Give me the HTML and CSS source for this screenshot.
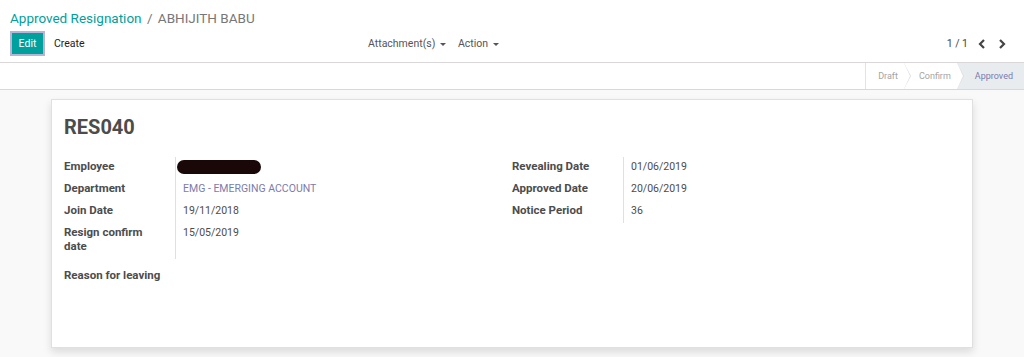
FILE: index.html
```html
<!DOCTYPE html>
<html lang="en">
<head>
    <meta charset="UTF-8">
    <title>Approved Resignation</title>
    <link rel="stylesheet" href="styles.css">
</head>
<body>
    <div class="control-panel">
        <div class="breadcrumb">
            <a href="#">Approved Resignation</a>
            <span class="sep">/</span>
            <span class="current">ABHIJITH BABU</span>
        </div>
        <div class="cp-row">
            <div class="cp-buttons">
                <button class="btn-edit">Edit</button>
                <button class="btn-link">Create</button>
            </div>
            <div class="cp-sidebar">
                <span class="dropdown">Attachment(s) <span class="caret"></span></span>
                <span class="dropdown">Action <span class="caret"></span></span>
            </div>
            <div class="pager">
                <span class="pager-value">1 / 1</span>
                <svg width="10" height="12" viewBox="0 0 10 12"><path d="M7 2 L3 6 L7 10" fill="none" stroke="#444" stroke-width="2.2"/></svg>
                <svg width="10" height="12" viewBox="0 0 10 12"><path d="M3 2 L7 6 L3 10" fill="none" stroke="#444" stroke-width="2.2"/></svg>
            </div>
        </div>
    </div>

    <div class="statusbar">
        <div class="status-steps">
            <span class="step">Draft</span>
            <span class="step">Confirm</span>
            <span class="step active">Approved</span>
        </div>
    </div>

    <div class="sheet-bg">
        <div class="sheet">
            <h1 class="title">RES040</h1>
            <div class="groups">
                <table class="group">
                    <tr><td class="label">Employee</td><td class="value"><span class="redact"></span></td></tr>
                    <tr><td class="label">Department</td><td class="value"><a href="#">EMG - EMERGING ACCOUNT</a></td></tr>
                    <tr><td class="label">Join Date</td><td class="value">19/11/2018</td></tr>
                    <tr><td class="label">Resign confirm<br>date</td><td class="value">15/05/2019</td></tr>
                </table>
                <table class="group">
                    <tr><td class="label">Revealing Date</td><td class="value">01/06/2019</td></tr>
                    <tr><td class="label">Approved Date</td><td class="value">20/06/2019</td></tr>
                    <tr><td class="label">Notice Period</td><td class="value">36</td></tr>
                </table>
            </div>
            <div class="reason">Reason for leaving</div>
        </div>
    </div>
</body>
</html>
```

FILE: styles.css
```css
body {
    margin: 0;
    font-family: Roboto, "Noto Sans", sans-serif;
    font-size: 10.5px;
    color: #4c4c4c;
    background-color: #f9f9f9;
    height: 357px;
    overflow: hidden;
}
.control-panel {
    background-color: #fff;
    padding: 8px 10px 0 10px;
    height: 54px;
    border-bottom: 1px solid #d9d7d7;
}
.breadcrumb {
    font-size: 13.5px;
    line-height: 20px;
    height: 21px;
}
.breadcrumb a {
    color: #00a09d;
    text-decoration: none;
}
.breadcrumb .sep {
    color: #777;
    margin: 0 2px;
}
.breadcrumb .current {
    color: #777;
}
.cp-row {
    display: flex;
    align-items: center;
    margin-top: 2px;
}
.cp-buttons {
    display: flex;
    align-items: center;
    width: 358px;
}
.btn-edit {
    background-color: #00a09d;
    color: #fff;
    border: 2px solid #b6b5d8;
    font-family: inherit;
    font-size: 10.5px;
    height: 25px;
    width: 35px;
    padding: 0;
}
.btn-link {
    background: none;
    border: none;
    font-family: inherit;
    font-size: 10.5px;
    color: #222;
    padding: 0 0 0 9px;
}
.cp-sidebar {
    display: flex;
    gap: 12px;
    flex: 1;
    color: #555;
}
.caret {
    display: inline-block;
    width: 0;
    height: 0;
    border-left: 3px solid transparent;
    border-right: 3px solid transparent;
    border-top: 3px solid #555;
    vertical-align: middle;
    margin-left: 2px;
}
.pager {
    display: flex;
    align-items: center;
    gap: 10px;
    padding-right: 7px;
}
.pager-value {
    color: #444;
    margin-right: -1px;
}
.statusbar {
    background-color: #fff;
    height: 26px;
    border-bottom: 1px solid #d9d7d7;
    display: flex;
    justify-content: flex-end;
}
.status-steps {
    display: flex;
    height: 100%;
    border-left: 1px solid #e3e3e3;
}
.step {
    position: relative;
    display: flex;
    align-items: center;
    font-size: 9px;
    color: #a4a4a4;
    padding: 0 6px 0 15px;
}
.step:first-child {
    padding-left: 12px;
}
.step::after {
    content: "";
    position: absolute;
    right: -7px;
    top: 0;
    width: 0;
    height: 0;
    border-top: 13px solid transparent;
    border-bottom: 13px solid transparent;
    border-left: 7px solid #dcdcdc;
    z-index: 1;
}
.step::before {
    content: "";
    position: absolute;
    right: -6px;
    top: 0;
    width: 0;
    height: 0;
    border-top: 13px solid transparent;
    border-bottom: 13px solid transparent;
    border-left: 6px solid #fff;
    z-index: 2;
}
.step.active {
    background-color: #e9ecef;
    color: #7c7bad;
    padding-left: 18px;
    padding-right: 11px;
}
.step.active::after,
.step.active::before {
    display: none;
}
.sheet-bg {
    padding: 9px 0 0 51px;
}
.sheet {
    background-color: #fff;
    width: 922px;
    height: 249px;
    border: 1px solid #e0e0e0;
    box-shadow: 0 4px 8px rgba(0, 0, 0, 0.12);
    padding: 0 12px;
    box-sizing: border-box;
}
.title {
    font-size: 20px;
    font-weight: bold;
    color: #4c4c4c;
    margin: 13px 0 0 0;
    line-height: 28px;
}
.groups {
    display: flex;
    align-items: flex-start;
    margin-top: 16px;
}
.group {
    border-collapse: collapse;
    width: 448px;
}
.label {
    font-size: 11.5px;
    font-weight: bold;
    color: #4c4c4c;
    width: 111px;
    padding: 2px 0 6px 0;
    vertical-align: top;
    line-height: 14px;
}
.value {
    border-left: 1px solid #e0e0e0;
    padding: 3px 0 5px 7px;
    vertical-align: top;
    line-height: 14px;
}
.value a {
    color: #7c7bad;
    text-decoration: none;
}
.redact {
    display: inline-block;
    width: 84px;
    height: 14px;
    background-color: #1a0808;
    border-radius: 7px;
    margin-left: -6px;
    vertical-align: top;
}
.reason {
    font-size: 11.5px;
    font-weight: bold;
    margin-top: 9px;
}
```
